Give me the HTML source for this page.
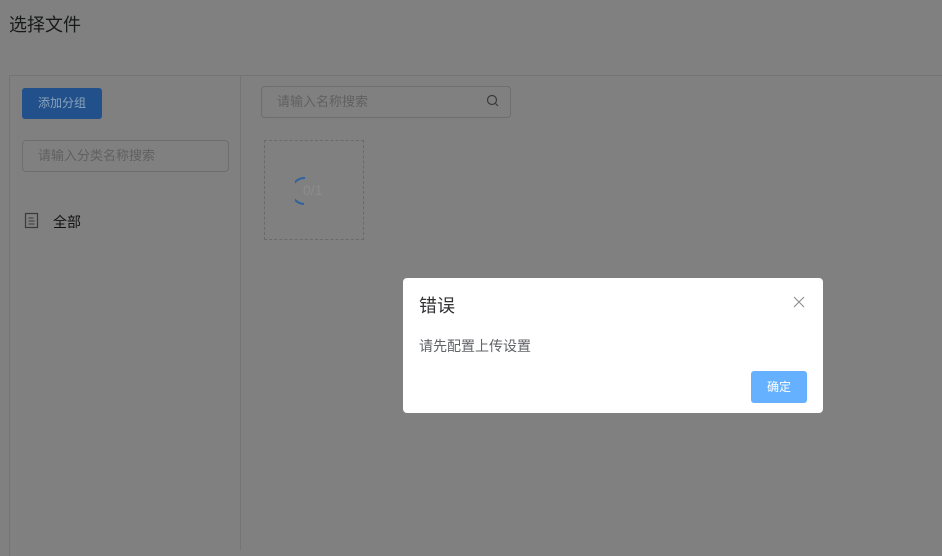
<html><head><style>
body{margin:0;width:942px;height:550px;background:#808080;font-family:"Liberation Sans","Noto Sans CJK SC",sans-serif;position:relative;overflow:hidden}
.a{position:absolute}
</style></head><body>
<div class="a" style="left:9px;top:11px;font-size:18px;color:#181919">选择文件</div>
<div class="a" style="left:9px;top:75px;width:940px;height:480px;border-top:1px solid #747474;border-left:1px solid #747474"></div>
<div class="a" style="left:240px;top:76px;width:1px;height:474px;background:#747474"></div>
<div class="a" style="left:22px;top:88px;width:80px;height:31px;background:#21508a;border-radius:3px;color:#8aa3bf;font-size:12px;line-height:31px;text-align:center">添加分组</div>
<div class="a" style="left:22px;top:140px;width:205px;height:30px;border:1px solid #6e6e6e;border-radius:4px;color:#606060;font-size:13px;line-height:30px;text-indent:15px">请输入分类名称搜索</div>
<svg class="a" style="left:24px;top:212px" width="16" height="18" viewBox="0 0 16 18"><rect x="1.5" y="1.5" width="12" height="14" fill="none" stroke="#3a3a3a" stroke-width="1.2"/><path d="M4.5 6h5M4.5 9h6M4.5 12h6" stroke="#3a3a3a"/></svg>
<div class="a" style="left:53px;top:212px;font-size:14px;color:#121212">全部</div>
<div class="a" style="left:261px;top:86px;width:248px;height:30px;border:1px solid #6e6e6e;border-radius:4px;color:#606060;font-size:13px;line-height:30px;text-indent:15px">请输入名称搜索</div>
<svg class="a" style="left:486px;top:94px" width="14" height="14" viewBox="0 0 14 14"><circle cx="6" cy="6" r="4.5" fill="none" stroke="#3a3a3a" stroke-width="1.2"/><path d="M9.5 9.5L12 12" stroke="#3a3a3a" stroke-width="1.2"/></svg>
<div class="a" style="left:264px;top:140px;width:98px;height:98px;border:1px dashed #6a6a6a"></div>
<svg class="a" style="left:295px;top:175px" width="20" height="32" viewBox="0 0 20 32"><path d="M10 3A12 12 0 0 0 9 29" fill="none" stroke="#2f62a0" stroke-width="2"/></svg>
<div class="a" style="left:303px;top:182px;font-size:14px;color:#8c8c8c">0/1</div>
<div class="a" style="left:403px;top:278px;width:420px;height:135px;background:#fff;border-radius:4px"></div>
<div class="a" style="left:419px;top:292px;font-size:18px;color:#303133">错误</div>
<svg class="a" style="left:793px;top:296px" width="12" height="12" viewBox="0 0 12 12"><path d="M1 1L11 11M11 1L1 11" stroke="#909399" stroke-width="1.2"/></svg>
<div class="a" style="left:419px;top:336px;font-size:14px;color:#606266">请先配置上传设置</div>
<div class="a" style="left:751px;top:371px;width:56px;height:32px;background:#66b1ff;border-radius:3px;color:#fff;font-size:12px;line-height:32px;text-align:center">确定</div>
</body></html>
